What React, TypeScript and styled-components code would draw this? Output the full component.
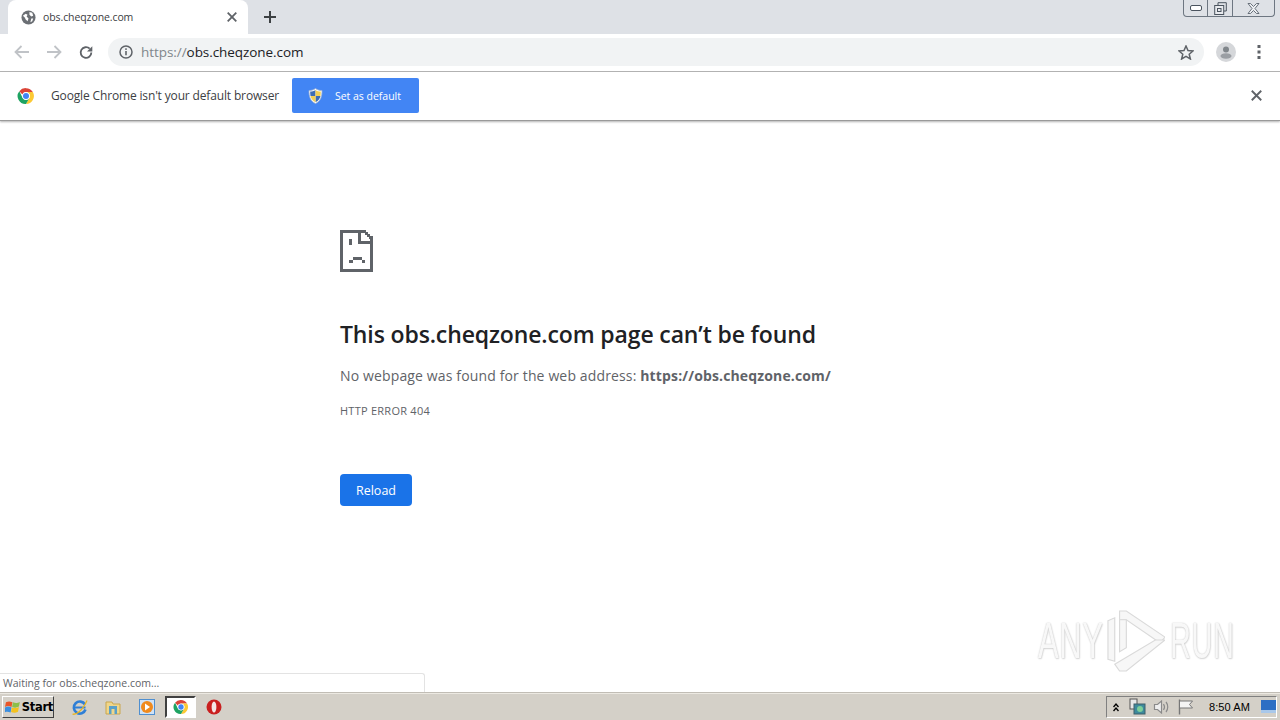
import React from "react";
import styled, { createGlobalStyle } from "styled-components";

const Global = createGlobalStyle`
  html, body { margin: 0; padding: 0; height: 100%; background: #fff; overflow: hidden; }
  #root { height: 720px; }
  * { box-sizing: border-box; }
`;
const UI = `"Open Sans", "Noto Sans", sans-serif`;

const Screen = styled.div`
  position: relative; width: 1280px; height: 720px; display: flex; flex-direction: column;
  font-family: ${UI}; background: #fff;
`;
const TabStrip = styled.div`
  height: 34px; background: #dee1e6; display: flex; align-items: flex-start; padding-left: 8px; flex: none;
`;
const Tab = styled.div`
  width: 240px; height: 34px; background: #fff; border-radius: 8px 8px 0 0; display: flex; align-items: center;
  padding: 0 0 0 13px;
`;
const TabTitle = styled.span`
  font-size: 10.5px; color: #3c4043; margin-left: 7px; flex: 1; letter-spacing: -0.09px;
`;
const IconSlot = styled.span<{ $ml?: number }>`
  display: inline-flex; align-items: center; justify-content: center; flex: none;
  margin-left: ${p => p.$ml ?? 0}px;
`;
const TabClose = styled(IconSlot)`
  width: 12px; height: 12px; margin-right: 10px;
`;
const NewTab = styled(IconSlot)`
  width: 14px; height: 14px; margin: 10px 0 0 15px;
`;
const WindowButtons = styled.div`
  margin-left: auto; margin-right: 5px; width: 92px; height: 17px; display: flex;
  border: 1px solid #6d7681; border-top: none; border-radius: 0 0 4px 4px;
`;
const WinButton = styled.span<{ $w: number; $line?: boolean }>`
  width: ${p => p.$w}px; display: flex; align-items: center; justify-content: center;
  border-right: ${p => (p.$line ? "1px solid #6d7681" : "none")};
`;
const Toolbar = styled.div`
  height: 38px; flex: none; display: flex; align-items: center; background: #fff; border-bottom: 1px solid #b6b6b6;
  padding: 0 0 1px 14px;
`;
const NavIcon = styled(IconSlot)<{ $mr?: number }>`
  width: 16px; height: 16px; margin-right: ${p => p.$mr ?? 16}px;
`;
const Omnibox = styled.div`
  width: 1096px; height: 28px; background: #f1f3f4; border-radius: 14px; display: flex; align-items: center;
  padding: 0 10px 0 11px;
`;
const Url = styled.span`
  margin-left: 8px; font-size: 13.5px; color: #202124; flex: 1; letter-spacing: -0.06px;
`;
const UrlScheme = styled.span`color: #80868b;`;
const Avatar = styled(IconSlot)`
  width: 20px; height: 20px; margin-left: 12px;
`;
const Kebab = styled(IconSlot)`
  width: 4px; height: 14px; margin-left: 21px;
`;
const Infobar = styled.div`
  height: 49px; flex: none; display: flex; align-items: center; padding: 0 0 1px 17px; background: #fff;
  border-bottom: 1px solid #9a9a9a; box-shadow: 0 1px 2px rgba(0,0,0,.3); position: relative;
`;
const InfoText = styled.span`
  font-size: 12px; color: #3c4043; margin-left: 16px; letter-spacing: -0.15px; width: 241px;
`;
const DefaultButton = styled.div`
  width: 127px; height: 35px; background: #4285f4; border-radius: 2px; display: flex; align-items: center;
  padding-left: 16px; color: #fff; font-size: 10.5px; letter-spacing: -0.02px;
`;
const ButtonLabel = styled.span`margin-left: 12px;`;
const InfoClose = styled(IconSlot)`
  margin-left: auto; margin-right: 18px; width: 12px; height: 12px;
`;
const Page = styled.main`
  flex: 1; padding: 109px 0 0 340px; background: #fff; min-height: 0;
`;
const SadIcon = styled.div`height: 44px; margin-bottom: 45px; line-height: 0;`;
const Heading = styled.h1`
  margin: 0 0 17px; font-size: 23px; font-weight: 600; line-height: 30px; color: #202124; letter-spacing: -0.13px;
  font-family: "Open Sans", sans-serif;
`;
const Body = styled.p`
  margin: 0; font-size: 14px; line-height: 20px; color: #5f6368; letter-spacing: 0.14px;
`;
const Strong = styled.strong`font-weight: 700; color: #5f6368;`;
const ErrorCode = styled.p`
  margin: 18px 0 0; font-size: 11px; line-height: 14px; color: #5f6368; text-transform: uppercase; letter-spacing: 0.25px;
`;
const Reload = styled.button`
  display: block; margin-top: 56px; width: 72px; height: 32px; border: none; border-radius: 4px; background: #1a73e8;
  color: #fff; font-family: ${UI}; font-size: 12.5px; padding: 0;
`;
const StatusBubble = styled.div`
  position: absolute; left: 0; bottom: 28px; width: 425px; height: 19px; background: #fff;
  border: 1px solid #e3e3e3; border-bottom: none; border-left: none; border-radius: 0 3px 0 0;
  font-size: 10.5px; color: #5f6368; padding: 1px 0 0 3px; line-height: 16px;
`;
const Watermark = styled.div`
  position: absolute; left: 1038px; top: 610px; display: flex; align-items: center; height: 62px;
`;
const WatermarkText = styled.span`
  font-family: "Liberation Sans", sans-serif; font-size: 50px; font-weight: 400; color: #f8f8f8;
  letter-spacing: 1px; line-height: 1; transform-origin: left center;
  text-shadow: 0 0 2px #c4c4c4, 1px 1px 2px #d8d8d8;
`;
const WatermarkLeft = styled(WatermarkText)`transform: scaleX(.62); width: 69px;`;
const WatermarkRight = styled(WatermarkText)`transform: scaleX(.58); margin-left: 5px; width: 62px;`;
const WatermarkLogo = styled.svg`filter: blur(.7px); flex: none;`;
const Taskbar = styled.footer`
  height: 28px; flex: none; background: #d4d0c8; border-top: 1px solid #c1bdb5; display: flex; align-items: center;
  position: relative; font-family: "Liberation Sans", sans-serif; box-shadow: inset 0 1px 0 #ece9e2;
`;
const StartButton = styled.div`
  width: 52px; height: 22px; margin-left: 2px; display: flex; align-items: center; padding-left: 2px; gap: 1px;
  background: #d4d0c8; border: 1px solid; border-color: #fff #404040 #404040 #fff;
  font-family: "DejaVu Sans", sans-serif; font-weight: 700; font-size: 11.5px; color: #000; letter-spacing: -0.3px;
`;
const Quick = styled(IconSlot)`
  width: 18px; height: 18px;
`;
const ActiveTask = styled.div`
  width: 31px; height: 22px; margin-left: 9px; background: #fff; display: flex; align-items: center; justify-content: center;
  border: 2px solid; border-color: #404040 #fff #fff #404040;
`;
const Tray = styled.div`
  margin-left: auto; height: 22px; width: 171px; margin-right: 3px; display: flex; align-items: center;
  border: 1px solid; border-color: #808080 #fff #fff #808080; padding-left: 6px;
`;
const Clock = styled.span`
  font-size: 11px; color: #000; margin-left: 15px; width: 52px; letter-spacing: .1px;
`;

const Globe = () => (
  <svg width="15" height="15" viewBox="0 0 16 16">
    <circle cx="8" cy="8" r="7.5" fill="#6b6f74" />
    <path d="M2 6l3-2 2 1-1 2 2 2-1 3-2-2-1-2zM9 2l3 1 1 3-2 1-2-2zM11 9l2 0-1 3-2 1z" fill="#fff" />
  </svg>
);
const Cross = ({ c = "#5f6368", s = 10, w = 1.8 }: { c?: string; s?: number; w?: number }) => (
  <svg width={s} height={s} viewBox="0 0 10 10"><path d="M.7.7l8.6 8.6M9.3.7L.7 9.3" stroke={c} strokeWidth={w} fill="none" /></svg>
);
const ChromeLogo = ({ s = 18 }: { s?: number }) => (
  <svg width={s} height={s} viewBox="0 0 48 48">
    <path d="M24 3a21 21 0 0 1 18.2 10.5H24a10.5 10.5 0 0 0-9.6 6.2L6.2 11A21 21 0 0 1 24 3z" fill="#db4437" />
    <path d="M42.2 13.500A21 21 0 0 1 24 45l9.100-15.700A10.500 10.500 0 0 0 33 18.500 10.500 10.500 0 0 0 24 13.500z" fill="#fcc934" />
    <path d="M24 45A21 21 0 0 1 6.200 11l8.800 18.300A10.500 10.500 0 0 0 33.100 29.300z" fill="#1ea362" />
    <circle cx="24" cy="24" r="10" fill="#fff" />
    <circle cx="24" cy="24" r="8" fill="#4285f4" />
  </svg>
);
const Shield = () => (
  <svg width="15" height="16" viewBox="0 0 15 16">
    <path d="M7.500 .5C5.500 2 3.500 2.500 1 2.500 1 8 2 13 7.500 15.500 13 13 14 8 14 2.500 11.500 2.500 9.500 2 7.500 .5z" fill="#fff" stroke="#9fb3d1" strokeWidth=".8" />
    <path d="M7.500 2v6H2.500C2.200 6.500 2.200 5 2.200 3.600 4 3.500 6 3.100 7.500 2z" fill="#3d6cb5" />
    <path d="M7.500 8h5c-.5 2.500-2 4.800-5 6.200z" fill="#3d6cb5" />
    <path d="M7.500 2c1.500 1.100 3.500 1.500 5.300 1.600 0 1.400 0 2.900-.3 4.400h-5z" fill="#f2cf55" />
    <path d="M7.500 8v6.200c-3-1.400-4.500-3.700-5-6.200z" fill="#f2cf55" />
  </svg>
);
const SadTab = () => (
  <svg width="33" height="42" viewBox="0 0 33 42" shapeRendering="crispEdges">
    <path d="M0 0H26V2H28V4H30V6H33V42H0Z" fill="#5f6368" />
    <path d="M3 3H18V14H30V39H3Z" fill="#fff" />
    <path d="M21 3H25V5H27V7H29V9H30V11H21Z" fill="#fff" />
    <rect x="9" y="9" width="3" height="6" fill="#5f6368" />
    <rect x="13" y="27" width="9" height="3" fill="#5f6368" />
    <rect x="9" y="30" width="4" height="3" fill="#5f6368" />
    <rect x="22" y="30" width="3" height="3" fill="#5f6368" />
  </svg>
);

export default function App() {
  return (
    <Screen>
      <Global />
      <TabStrip>
        <Tab>
          <Globe />
          <TabTitle>obs.cheqzone.com</TabTitle>
          <TabClose><Cross /></TabClose>
        </Tab>
        <NewTab>
          <svg width="12" height="12" viewBox="0 0 12 12"><path d="M6 0v12M0 6h12" stroke="#3c4043" strokeWidth="2" /></svg>
        </NewTab>
        <WindowButtons>
          <WinButton $w={24} $line>
            <svg width="12" height="6" viewBox="0 0 12 6"><rect x=".5" y=".5" width="11" height="5" rx="1.500" fill="#fff" stroke="#4b545f" /></svg>
          </WinButton>
          <WinButton $w={25} $line>
            <svg width="13" height="13" viewBox="0 0 13 13"><path d="M4 3V.7h8.300V9H10" fill="none" stroke="#4b545f" /><rect x=".7" y="3.500" width="9" height="9" fill="#e8eaee" stroke="#4b545f" /><rect x="3.500" y="6.500" width="3.500" height="3" fill="none" stroke="#4b545f" /></svg>
          </WinButton>
          <WinButton $w={41}>
            <svg width="13" height="11" viewBox="0 0 13 11"><path d="M1 .5h2.500l3 3 3-3H12L8 5.500l4 5H9.500l-3-3-3 3H1l4-5z" fill="#eef0f3" stroke="#5a636e" strokeWidth=".9" /></svg>
          </WinButton>
        </WindowButtons>
      </TabStrip>
      <Toolbar>
        <NavIcon>
          <svg width="16" height="14" viewBox="0 0 16 14"><path d="M15 7H2M7.500 1L1.500 7l6 6" fill="none" stroke="#c0c3c7" strokeWidth="1.800" /></svg>
        </NavIcon>
        <NavIcon>
          <svg width="16" height="14" viewBox="0 0 16 14"><path d="M1 7h13M8.500 1l6 6-6 6" fill="none" stroke="#c0c3c7" strokeWidth="1.800" /></svg>
        </NavIcon>
        <NavIcon $mr={14}>
          <svg width="17" height="17" viewBox="0 0 24 24"><path d="M20 12a8 8 0 1 1-2.400-5.700" fill="none" stroke="#5f6368" strokeWidth="2.800" /><path d="M21.500 2.500v8h-8z" fill="#5f6368" /></svg>
        </NavIcon>
        <Omnibox>
          <svg width="14" height="14" viewBox="0 0 14 14"><circle cx="7" cy="7" r="6" fill="none" stroke="#5f6368" strokeWidth="1.500" /><path d="M7 6v4.300" stroke="#5f6368" strokeWidth="1.600" /><rect x="6.200" y="3.300" width="1.600" height="1.600" fill="#5f6368" /></svg>
          <Url><UrlScheme>https://</UrlScheme>obs.cheqzone.com</Url>
          <svg width="16" height="15" viewBox="0 0 16 15"><path d="M8 1l2 4.600 5 .4-3.800 3.300L12.400 14 8 11.400 3.600 14l1.200-4.700L1 6l5-.4z" fill="none" stroke="#5f6368" strokeWidth="1.500" /></svg>
        </Omnibox>
        <Avatar>
          <svg width="20" height="20" viewBox="0 0 20 20"><circle cx="10" cy="10" r="10" fill="#d5d7da" /><circle cx="10" cy="7.500" r="3" fill="#80868b" /><ellipse cx="10" cy="14" rx="5.500" ry="2.800" fill="#9a9ea3" /></svg>
        </Avatar>
        <Kebab>
          <svg width="4" height="14" viewBox="0 0 4 14" fill="#5f6368"><rect x=".5" width="3" height="3" /><rect x=".5" y="5.500" width="3" height="3" /><rect x=".5" y="11" width="3" height="3" /></svg>
        </Kebab>
      </Toolbar>
      <Infobar>
        <ChromeLogo />
        <InfoText>Google Chrome isn't your default browser</InfoText>
        <DefaultButton>
          <Shield />
          <ButtonLabel>Set as default</ButtonLabel>
        </DefaultButton>
        <InfoClose><Cross s={11} w={1.700} /></InfoClose>
      </Infobar>
      <Page>
        <SadIcon><SadTab /></SadIcon>
        <Heading>This obs.cheqzone.com page can’t be found</Heading>
        <Body>No webpage was found for the web address: <Strong>https://obs.cheqzone.com/</Strong></Body>
        <ErrorCode>HTTP ERROR 404</ErrorCode>
        <Reload>Reload</Reload>
      </Page>
      <StatusBubble>Waiting for obs.cheqzone.com...</StatusBubble>
      <Watermark>
        <WatermarkLeft>ANY</WatermarkLeft>
        <WatermarkLogo width="58" height="62" viewBox="0 0 60 62" fill="#f7f7f7" stroke="#dadada" strokeWidth="1.200">
          <path d="M1 10L8 7V52L1 50Z" />
          <path d="M13 0H20L60 27L55 33L20 9H13Z" />
          <path d="M13 9H20V38L13 42Z" />
          <path d="M8 55L50 30H60L20 62H13Z" />
        </WatermarkLogo>
        <WatermarkRight>RUN</WatermarkRight>
      </Watermark>
      <Taskbar>
        <StartButton>
          <svg width="17" height="16" viewBox="0 0 17 16">
            <path d="M1 3c3-1.500 4.500-1 7 0L7 8C4.500 7 3 6.500 0 8z" fill="#e8562a" />
            <path d="M8.500 3c3 1 4.500 1 7.500-.5L15 7.500C12 9 10.500 9 7.700 8z" fill="#8cbf4a" />
            <path d="M0 8.500c3-1.500 4.500-1 7 0L6 14c-2.500-1-4-1.500-7 0z" fill="#3a8ee0" />
            <path d="M7.500 8.500c3 1 4.500 1 7.500-.5l-1 5c-3 1.500-4.500 1.500-7.500.5z" fill="#f4c21f" />
          </svg>
          Start
        </StartButton>
        <Quick $ml={17}>
          <svg width="18" height="18" viewBox="0 0 18 18"><path d="M14.500 11.500A6 6 0 1 1 14 6.500" fill="none" stroke="#2f7fd6" strokeWidth="2.600" /><path d="M3.500 9.500h11" stroke="#2f7fd6" strokeWidth="2" /><path d="M1.500 16c3 1.200 10-3 14.500-13.500" fill="none" stroke="#e6b422" strokeWidth="1.300" /></svg>
        </Quick>
        <Quick $ml={15}>
          <svg width="18" height="18" viewBox="0 0 18 18"><path d="M2 4h6l1 2h7v10H2z" fill="#f0d68a" stroke="#c9a64e" /><rect x="5" y="8" width="8" height="8" fill="#5aa0c8" /><rect x="7.500" y="11" width="3" height="5" fill="#f0d68a" /></svg>
        </Quick>
        <Quick $ml={16}>
          <svg width="18" height="18" viewBox="0 0 18 18"><rect x="1.500" y="1.500" width="15" height="15" fill="#cfe2f6" stroke="#4f8fd0" /><circle cx="9" cy="9" r="6" fill="#f08a1d" /><path d="M7 5.500l5 3.500-5 3.500z" fill="#fff" /></svg>
        </Quick>
        <ActiveTask><ChromeLogo s={16} /></ActiveTask>
        <Quick $ml={9}>
          <svg width="18" height="18" viewBox="0 0 18 18"><circle cx="9" cy="9" r="7.500" fill="#c91f1f" /><ellipse cx="9" cy="9" rx="2.400" ry="5.500" fill="#f4e6e6" /></svg>
        </Quick>
        <Tray>
          <svg width="6" height="10" viewBox="0 0 6 10"><path d="M.5 5L3 2l2.500 3M.5 9L3 6l2.500 3" fill="none" stroke="#000" strokeWidth="1.400" /></svg>
          <IconSlot $ml={10}>
            <svg width="17" height="17" viewBox="0 0 17 17"><rect x="1" y="1" width="7" height="10" fill="#e8e8e8" stroke="#555" /><rect x="5" y="6" width="11" height="10" fill="#3d8a9c" stroke="#3f5f6a" /><circle cx="11" cy="11" r="3" fill="#7ecf9a" /></svg>
          </IconSlot>
          <IconSlot $ml={7}>
            <svg width="17" height="16" viewBox="0 0 17 16" fill="none" stroke="#8a8a8a" strokeWidth="1.200"><path d="M1.500 5.500h3l4-3.500v12l-4-3.500h-3z" fill="#eee" /><path d="M10.500 5c1.200 1.800 1.200 4.200 0 6M13 3c2.300 2.800 2.300 7.200 0 10" /></svg>
          </IconSlot>
          <IconSlot $ml={8}>
            <svg width="16" height="16" viewBox="0 0 16 16" fill="none" stroke="#777"><path d="M1.500 .5v15" strokeWidth="1.400" /><path d="M1.500 2h13l-3 3.500 3 3.500h-13z" fill="#f4f4f4" /></svg>
          </IconSlot>
          <Clock>8:50 AM</Clock>
          <svg width="15" height="13" viewBox="0 0 15 13"><rect width="15" height="13" fill="#2e6fc4" /><rect y="10" width="15" height="3" fill="#a9c8ea" /></svg>
        </Tray>
      </Taskbar>
    </Screen>
  );
}
